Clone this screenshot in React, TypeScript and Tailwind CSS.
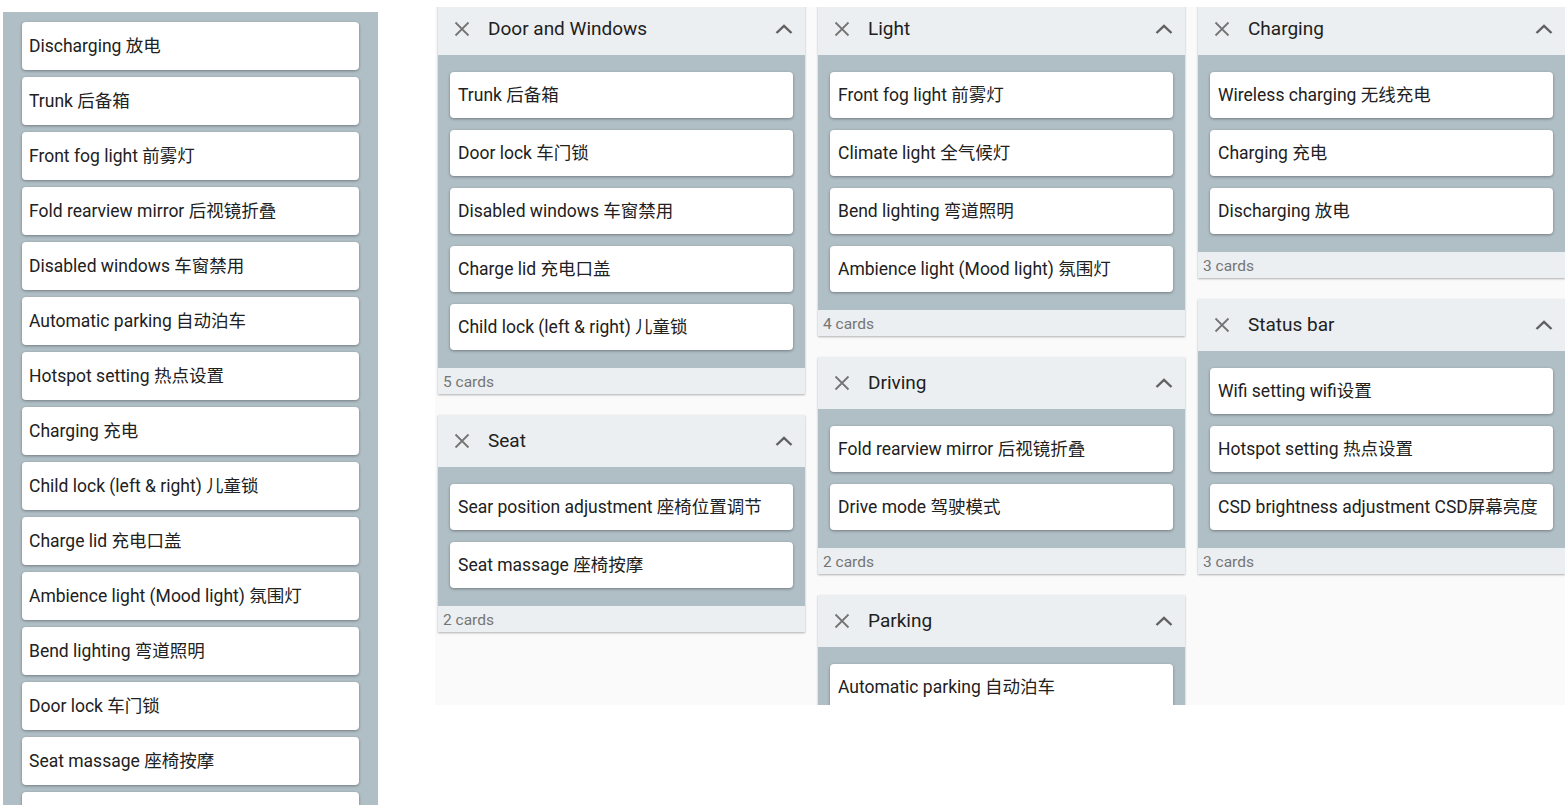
import React from "react"

const font = { fontFamily: 'Roboto, "Noto Sans CJK SC", sans-serif' }

const pool = [
  "Discharging 放电",
  "Trunk 后备箱",
  "Front fog light 前雾灯",
  "Fold rearview mirror 后视镜折叠",
  "Disabled windows 车窗禁用",
  "Automatic parking 自动泊车",
  "Hotspot setting 热点设置",
  "Charging 充电",
  "Child lock (left & right) 儿童锁",
  "Charge lid 充电口盖",
  "Ambience light (Mood light) 氛围灯",
  "Bend lighting 弯道照明",
  "Door lock 车门锁",
  "Seat massage 座椅按摩",
  "Wireless charging 无线充电",
]

type Group = { title: string; items: string[] }

const columns: Group[][] = [
  [
    {
      title: "Door and Windows",
      items: ["Trunk 后备箱", "Door lock 车门锁", "Disabled windows 车窗禁用", "Charge lid 充电口盖", "Child lock (left & right) 儿童锁"],
    },
    { title: "Seat", items: ["Sear position adjustment 座椅位置调节", "Seat massage 座椅按摩"] },
  ],
  [
    {
      title: "Light",
      items: ["Front fog light 前雾灯", "Climate light 全气候灯", "Bend lighting 弯道照明", "Ambience light (Mood light) 氛围灯"],
    },
    { title: "Driving", items: ["Fold rearview mirror 后视镜折叠", "Drive mode 驾驶模式"] },
    { title: "Parking", items: ["Automatic parking 自动泊车", "Reverse camera 倒车影像"] },
  ],
  [
    { title: "Charging", items: ["Wireless charging 无线充电", "Charging 充电", "Discharging 放电"] },
    {
      title: "Status bar",
      items: ["Wifi setting wifi设置", "Hotspot setting 热点设置", "CSD brightness adjustment CSD屏幕亮度"],
    },
  ],
]

function CloseIcon() {
  return (
    <svg width="16" height="16" viewBox="0 0 16 16" className="shrink-0">
      <path d="M1.5 1.5 L14.5 14.5 M14.5 1.5 L1.5 14.5" stroke="#757575" strokeWidth="1.8" fill="none" />
    </svg>
  )
}

function ChevronUp() {
  return (
    <svg width="18" height="10" viewBox="0 0 18 10" className="shrink-0">
      <path d="M1.5 9 L9 1.8 L16.5 9" stroke="#616161" strokeWidth="2.4" fill="none" />
    </svg>
  )
}

function Card({ text, group }: { text: string; group?: boolean }) {
  return (
    <div
      className={`bg-white rounded-[4px] shadow-[0_1px_3px_rgba(0,0,0,0.35)] flex items-center text-[17.5px] text-[#212121] whitespace-nowrap shrink-0 ${
        group ? "h-[46px] pl-2" : "h-[48px] pl-[7px]"
      }`}
    >
      {text}
    </div>
  )
}

function GroupBox({ group }: { group: Group }) {
  return (
    <div className="bg-[#eceff1] shadow-[0_1px_2px_rgba(0,0,0,0.3)]">
      <div className="h-[52px] flex items-center pl-4 pr-3">
        <CloseIcon />
        <span className="ml-[18px] text-[19px] text-[#212121] flex-1">{group.title}</span>
        <ChevronUp />
      </div>
      <div className="bg-[#b0bec5] px-3 pt-[17px] pb-[18px] flex flex-col gap-[12px]">
        {group.items.map((t) => (
          <Card key={t} text={t} group />
        ))}
      </div>
      <div className="h-[26px] flex items-center pt-[3px] pl-[5px] text-[15.5px] text-[#757575]">
        {group.items.length} cards
      </div>
    </div>
  )
}

export default function App() {
  return (
    <div className="h-[805px] w-[1565px] overflow-hidden bg-white flex items-start" style={font}>
      <div className="ml-[3px] mt-[12px] w-[375px] h-[793px] bg-[#b0bec5] px-[19px] pt-[10px] flex flex-col gap-[7px] overflow-hidden">
        {pool.map((t) => (
          <Card key={t} text={t} />
        ))}
      </div>
      <div className="ml-[57px] mt-[7px] w-[1130px] h-[698px] bg-[#fafafa] pl-[3px] overflow-hidden">
        <div className="-mt-[4px] grid grid-cols-[367px_367px_367px] gap-x-[13px] items-start">
          {columns.map((col, i) => (
            <div key={i} className="flex flex-col gap-[21px]">
              {col.map((g) => (
                <GroupBox key={g.title} group={g} />
              ))}
            </div>
          ))}
        </div>
      </div>
    </div>
  )
}
